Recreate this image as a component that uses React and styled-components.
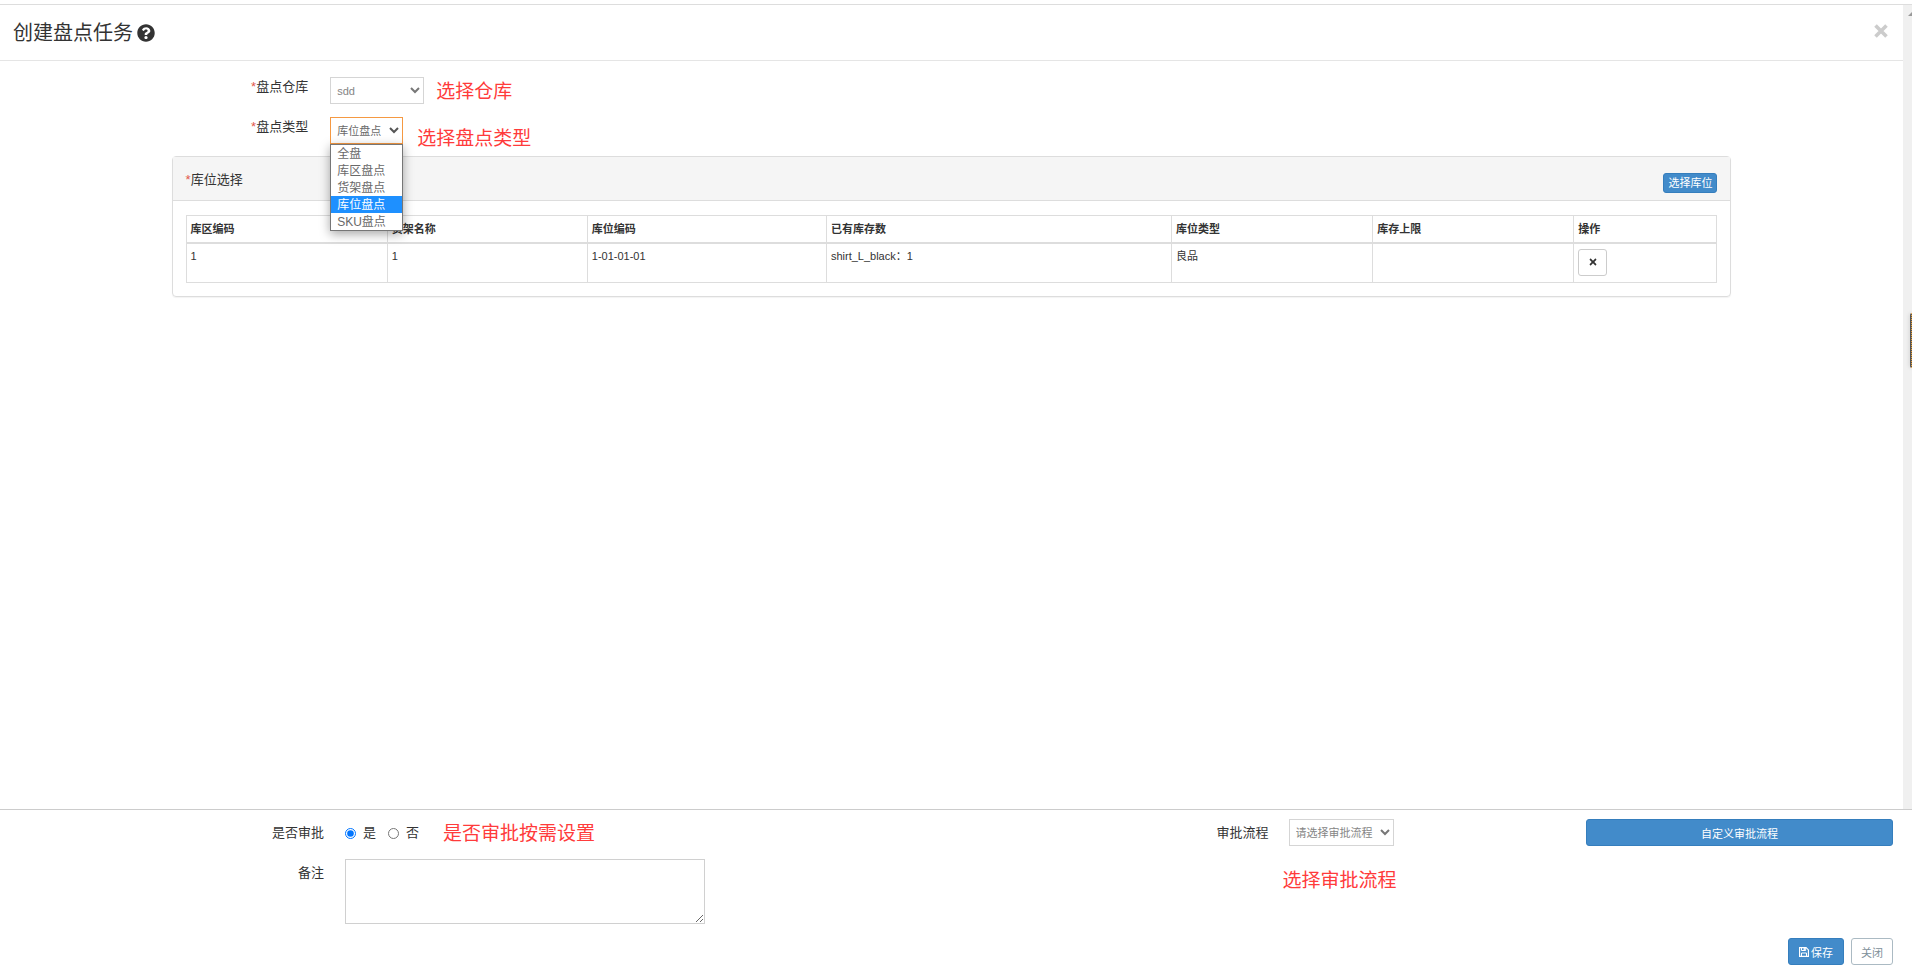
import React from 'react'
import styled, { createGlobalStyle, css } from 'styled-components'
import { FaQuestionCircle, FaTimes } from 'react-icons/fa'

const warehouses = ['sdd']
const countTypes = ['全盘', '库区盘点', '货架盘点', '库位盘点', 'SKU盘点']

const columns = [
    { key: 'area', title: '库区编码', width: 201 },
    { key: 'shelf', title: '货架名称', width: 200 },
    { key: 'code', title: '库位编码', width: 239 },
    { key: 'stock', title: '已有库存数', width: 345 },
    { key: 'type', title: '库位类型', width: 201 },
    { key: 'limit', title: '库存上限', width: 201 },
    { key: 'action', title: '操作', width: 143 },
]

const totalWidth = columns.reduce((sum, col) => sum + col.width, 0)

const initialRows = [
    { id: 1, area: '1', shelf: '1', code: '1-01-01-01', stock: 'shirt_L_black：1', type: '良品', limit: '' },
]

const App = () => {
    const [countType, setCountType] = React.useState('库位盘点')
    const [open, setOpen] = React.useState(true)
    const [rows, setRows] = React.useState(initialRows)
    const [approve, setApprove] = React.useState('yes')

    const pickType = (type) => {
        setCountType(type)
        setOpen(false)
    }

    const removeRow = (id) => {
        setRows(rows.filter(row => row.id !== id))
    }

    return (
        <Page>
            <GlobalStyle />
            <Main>
                <Content>
                    <Header>
                        <Title>创建盘点任务 <FaQuestionCircle size={18} /></Title>
                        <CloseIcon type="button" aria-label="关闭窗口"><CrossMark /></CloseIcon>
                    </Header>

                    <FormRow>
                        <Label htmlFor="warehouse"><Star>*</Star>盘点仓库</Label>
                        <SelectBox $width={94}>
                            <Select id="warehouse">
                                {warehouses.map(name => <option key={name}>{name}</option>)}
                            </Select>
                            <Chevron />
                        </SelectBox>
                        <Hint>选择仓库</Hint>
                    </FormRow>

                    <FormRow>
                        <Label htmlFor="count-type"><Star>*</Star>盘点类型</Label>
                        <SelectBox $width={73}>
                            <Select
                                id="count-type"
                                $active
                                value={countType}
                                onChange={(e) => pickType(e.target.value)}
                                onClick={() => setOpen(!open)}
                            >
                                {countTypes.map(type => <option key={type}>{type}</option>)}
                            </Select>
                            <Chevron $dark />
                            {open && (
                                <Options role="listbox">
                                    {countTypes.map(type => (
                                        <Option
                                            key={type}
                                            role="option"
                                            aria-selected={type === countType}
                                            $selected={type === countType}
                                            onClick={() => pickType(type)}
                                        >
                                            {type}
                                        </Option>
                                    ))}
                                </Options>
                            )}
                        </SelectBox>
                        <Hint $top={11} $left={14}>选择盘点类型</Hint>
                    </FormRow>

                    <PanelColumn>
                        <Panel>
                            <PanelHeading>
                                <span><Star>*</Star>库位选择</span>
                                <SmallButton type="button">选择库位</SmallButton>
                            </PanelHeading>
                            <PanelBody>
                                <Table>
                                    <colgroup>
                                        {columns.map(col => (
                                            <col key={col.key} style={{ width: `${col.width / totalWidth * 100}%` }} />
                                        ))}
                                    </colgroup>
                                    <thead>
                                        <tr>{columns.map(col => <Th key={col.key}>{col.title}</Th>)}</tr>
                                    </thead>
                                    <tbody>
                                        {rows.map(row => (
                                            <tr key={row.id}>
                                                {columns.map(col => (
                                                    <Td key={col.key}>
                                                        {col.key === 'action' ? (
                                                            <RemoveButton type="button" aria-label="删除" onClick={() => removeRow(row.id)}>
                                                                <FaTimes size={10} />
                                                            </RemoveButton>
                                                        ) : row[col.key]}
                                                    </Td>
                                                ))}
                                            </tr>
                                        ))}
                                    </tbody>
                                </Table>
                            </PanelBody>
                        </Panel>
                    </PanelColumn>
                </Content>
                <ScrollTrack><ScrollArrow /></ScrollTrack>
                <SideHandle />
            </Main>

            <Footer>
                <FooterRow>
                    <FooterSide>
                        <FooterLabel as="span" id="approve-label">是否审批</FooterLabel>
                        <RadioGroup role="radiogroup" aria-labelledby="approve-label">
                            <RadioLabel>
                                <Radio name="approve" checked={approve === 'yes'} onChange={() => setApprove('yes')} />是
                            </RadioLabel>
                            <RadioLabel>
                                <Radio name="approve" checked={approve === 'no'} onChange={() => setApprove('no')} />否
                            </RadioLabel>
                        </RadioGroup>
                        <Hint $left={24}>是否审批按需设置</Hint>
                    </FooterSide>
                    <FooterSide>
                        <FooterLabel htmlFor="flow">审批流程</FooterLabel>
                        <FlowSelectBox $width={105}>
                            <Select id="flow">
                                <option>请选择审批流程</option>
                            </Select>
                            <Chevron />
                        </FlowSelectBox>
                        <FlowButton type="button">自定义审批流程</FlowButton>
                    </FooterSide>
                </FooterRow>
                <FooterRow>
                    <FooterSide>
                        <FooterLabel htmlFor="remark">备注</FooterLabel>
                        <Textarea id="remark" />
                    </FooterSide>
                    <FooterSide>
                        <FooterLabel as="span" />
                        <Hint $top={11} $left={14}>选择审批流程</Hint>
                    </FooterSide>
                </FooterRow>
                <Actions>
                    <Button type="button" $primary><FloppyIcon />保存</Button>
                    <Button type="button">关闭</Button>
                </Actions>
            </Footer>
        </Page>
    )
}

export default App

const Chevron = ({ $dark }) => (
    <ChevronSvg viewBox="0 0 10 7" aria-hidden="true">
        <path d="M1 1l4 4 4-4" fill="none" stroke={$dark ? '#555' : '#777'} strokeWidth="2" />
    </ChevronSvg>
)

const CrossMark = () => (
    <svg width="14" height="14" viewBox="0 0 14 14" aria-hidden="true">
        <path d="M1.5 1.5l11 11M12.5 1.5l-11 11" stroke="#ccc" strokeWidth="3.6" />
    </svg>
)

const FloppyIcon = () => (
    <svg width="10" height="10" viewBox="0 0 12 12" fill="none" stroke="currentColor" aria-hidden="true">
        <path d="M.7.7h7.8l2.8 2.8v7.8H.7z" strokeWidth="1.4" />
        <path d="M3 .7v3.5h5V.7M3 11.3V7.2h6v4.1" strokeWidth="1.2" />
        <path d="M6.3 1v2.6" strokeWidth="1.6" />
    </svg>
)

const GlobalStyle = createGlobalStyle`
    *, *::before, *::after {
        box-sizing: border-box;
    }
    body {
        margin: 0;
        background: #fff;
        color: #333;
        font-family: "Liberation Sans", "Noto Sans CJK SC", sans-serif;
        font-size: 13px;
        line-height: 18px;
    }
    button, select, textarea, input {
        font-family: inherit;
    }
`

const Page = styled.div`
    display: flex;
    flex-direction: column;
    min-height: 100vh;
    padding-top: 4px;
`

const Main = styled.main`
    position: relative;
    display: flex;
    flex: 1;
    border-top: 1px solid #ddd;
`

const Content = styled.div`
    flex: 1;
    min-width: 0;
`

const Header = styled.header`
    display: flex;
    align-items: center;
    justify-content: space-between;
    height: 56px;
    padding: 0 15px 0 13px;
    border-bottom: 1px solid #e5e5e5;
`

const Title = styled.h4`
    display: flex;
    align-items: center;
    gap: 4px;
    margin: 0;
    font-size: 20px;
    font-weight: 400;
    line-height: 28px;
`

const CloseIcon = styled.button`
    display: flex;
    padding: 0 0 3px;
    border: 0;
    background: none;
    cursor: pointer;
`

const FormRow = styled.div`
    display: flex;
    height: 27px;
    margin-top: 16px;

    & + & {
        margin-top: 13px;
    }
`

const Label = styled.label`
    width: calc(100% / 6);
    padding: 1px 9px 0 0;
    text-align: right;
`

const Star = styled.span`
    color: #e2574c;
`

const SelectBox = styled.div`
    position: relative;
    width: ${props => props.$width}px;
    height: 27px;
    margin-left: 13px;
`

const FlowSelectBox = styled(SelectBox)`
    margin-left: 20px;
`

const Select = styled.select`
    width: 100%;
    height: 100%;
    padding: 0 6px;
    border: 1px solid ${props => props.$active ? '#f59942' : '#d5d5d5'};
    border-radius: 0;
    background: #fff;
    color: ${props => props.$active ? '#696969' : '#858585'};
    font-size: 11px;
    appearance: none;
    outline: none;
`

const ChevronSvg = styled.svg`
    position: absolute;
    top: 10px;
    right: 4px;
    width: 10px;
    height: 7px;
    pointer-events: none;
`

const Options = styled.ul`
    position: absolute;
    top: 100%;
    left: 0;
    z-index: 2;
    width: 100%;
    margin: 0;
    padding: 0;
    border: 1px solid #767676;
    background: #fff;
    box-shadow: 0 3px 10px rgba(0, 0, 0, 0.35);
    list-style: none;
`

const Option = styled.li`
    padding: 1px 0 0 6px;
    background: ${props => props.$selected ? '#1e90ff' : '#fff'};
    color: ${props => props.$selected ? '#fff' : '#696969'};
    font-size: 12px;
    line-height: 16px;
    white-space: nowrap;
`

const Hint = styled.span`
    margin-left: ${props => props.$left || 12}px;
    padding-top: ${props => props.$top || 4}px;
    color: #ff3b3b;
    font-size: 19px;
    line-height: 22px;
    white-space: nowrap;
`

const PanelColumn = styled.div`
    padding: 12px calc(100% / 12 + 13px);
`

const Panel = styled.section`
    border: 1px solid #ddd;
    border-radius: 4px;
    box-shadow: 0 1px 1px rgba(0, 0, 0, 0.05);
`

const PanelHeading = styled.div`
    display: flex;
    justify-content: space-between;
    height: 44px;
    padding: 14px 13px 0;
    border-bottom: 1px solid #ddd;
    background: #f5f5f5;
`

const buttonColors = css`
    border: 1px solid #357ebd;
    background: #428bca;
    color: #fff;
`

const SmallButton = styled.button`
    ${buttonColors}
    height: 20px;
    margin-top: 2px;
    padding: 0 4px;
    border-radius: 3px;
    font-size: 11px;
    line-height: 16px;
`

const PanelBody = styled.div`
    padding: 14px 13px 13px;
`

const Table = styled.table`
    width: 100%;
    table-layout: fixed;
    border-collapse: collapse;
    font-size: 11px;
    line-height: 16px;
`

const Th = styled.th`
    height: 27px;
    padding: 4px;
    border: 1px solid #ddd;
    border-bottom-width: 2px;
    font-weight: 700;
    text-align: left;
`

const Td = styled.td`
    height: 40px;
    padding: 4px;
    border: 1px solid #ddd;
    vertical-align: top;
`

const RemoveButton = styled.button`
    display: flex;
    align-items: center;
    justify-content: center;
    width: 29px;
    height: 27px;
    margin-top: 1px;
    border: 1px solid #ccc;
    border-radius: 3px;
    background: #fff;
    color: #333;
`

const ScrollTrack = styled.div`
    width: 9px;
    padding: 7px 0 0 5px;
    overflow: hidden;
    background: #f0f0f0;
`

const ScrollArrow = styled.div`
    width: 0;
    border: 4px solid transparent;
    border-top: 0;
    border-bottom-color: #999;
`

const SideHandle = styled.div`
    position: absolute;
    top: 308px;
    right: 0;
    width: 2px;
    height: 55px;
    border-right: 1px dotted #f0a030;
    border-radius: 3px 0 0 3px;
    background: #555;
    box-shadow: 0 0 4px rgba(0, 0, 0, 0.2);
`

const Footer = styled.footer`
    padding: 9px 19px 1px 0;
    border-top: 1px solid #ccc;
`

const FooterRow = styled.div`
    display: flex;
    min-height: 27px;

    & + & {
        margin-top: 13px;
    }
`

const FooterSide = styled.div`
    display: flex;
    flex: 1;

    & + & > :first-child {
        width: 322px;
    }
`

const FooterLabel = styled.label`
    width: 324px;
    padding-top: 5px;
    text-align: right;
`

const RadioGroup = styled.div`
    display: flex;
    gap: 12px;
    margin-left: 21px;
    padding-top: 5px;
`

const RadioLabel = styled.label`
    display: flex;
    align-items: center;
    gap: 7px;
    height: 18px;
`

const Radio = styled.input.attrs({ type: 'radio' })`
    width: 11px;
    height: 11px;
    margin: 0;
    accent-color: #0075ff;
`

const FlowButton = styled.button`
    ${buttonColors}
    width: 307px;
    height: 27px;
    margin-left: auto;
    border-radius: 3px;
    font-size: 11px;
`

const Textarea = styled.textarea`
    width: 360px;
    height: 65px;
    margin-left: 21px;
    border: 1px solid #d0d0d0;
    outline: none;
    resize: both;
`

const Actions = styled.div`
    display: flex;
    justify-content: flex-end;
    gap: 7px;
    margin-top: 14px;
`

const Button = styled.button`
    display: flex;
    align-items: center;
    gap: 2px;
    height: 27px;
    padding: 0 ${props => props.$primary ? 10 : 9}px;
    border: 1px solid #abbac3;
    border-radius: 3px;
    background: #fff;
    color: #80909a;
    font-size: 11px;
    ${props => props.$primary && buttonColors}
`
